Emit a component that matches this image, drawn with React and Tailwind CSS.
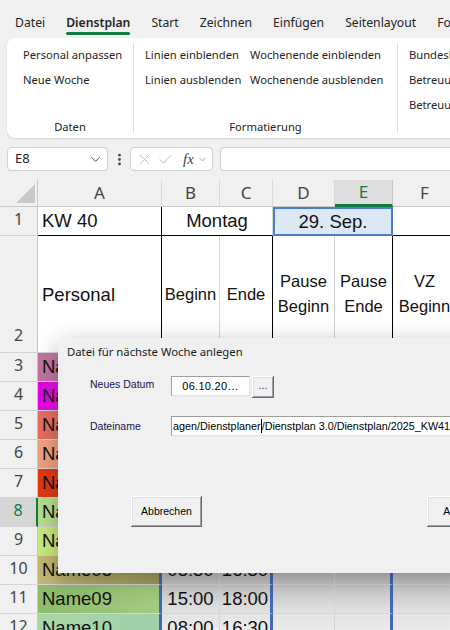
import React from "react";
import { ChevronDown, EllipsisVertical, X, Check } from "lucide-react";

const tabs = ["Datei", "Dienstplan", "Start", "Zeichnen", "Einfügen", "Seitenlayout", "Formeln"];

const W = {
  A: "w-[124px]",
  B: "w-[58px]",
  C: "w-[53px]",
  D: "w-[62px]",
  E: "w-[58px]",
  F: "w-[64px]",
};

const rightCls = {
  g: "border-r border-r-[#d4d4d4]",
  k: "border-r border-r-black",
  b: "border-r-[3px] border-r-[#4169b8]",
  n: "",
};
const bottomCls = {
  g: "border-b border-b-[#d4d4d4]",
  k: "border-b border-b-black",
  n: "",
};

// fill of the time columns; the last rows lie in the dialog's shade
const shade = {
  10: "bg-gradient-to-b from-[#bcbcbc] to-[#c8c8c8]",
  11: "bg-gradient-to-b from-[#c9c9c9] to-[#e1e1e1]",
  12: "bg-gradient-to-b from-[#e3e3e3] to-[#f1f1f1]",
};

const staff = [
  { n: "Name01", bg: "bg-gradient-to-r from-[#bf73a0] to-[#d69cbc]", b: "07:00", c: "15:30" },
  { n: "Name02", bg: "bg-gradient-to-r from-[#e400e4] to-[#ee40ee]", b: "08:00", c: "16:30" },
  { n: "Name03", bg: "bg-gradient-to-r from-[#e66c5e] to-[#ee9484]", b: "09:00", c: "17:30" },
  { n: "Name04", bg: "bg-gradient-to-r from-[#f0a07c] to-[#f6c0a0]", b: "07:30", c: "16:00" },
  { n: "Name05", bg: "bg-gradient-to-r from-[#e2360c] to-[#ea5a30]", b: "08:00", c: "12:00" },
  { n: "Name06", bg: "bg-gradient-to-r from-[#b5de8c] to-[#cbe8a8]", b: "10:00", c: "18:00" },
  { n: "Name07", bg: "bg-gradient-to-r from-[#c6ea7a] to-[#d8f09c]", b: "08:30", c: "17:00" },
  { n: "Name08", bg: "bg-gradient-to-r from-[#c4b874] to-[#a29c5e]", b: "08:30", c: "16:30" },
  { n: "Name09", bg: "bg-gradient-to-r from-[#8dbb6b] to-[#a2cb80]", b: "15:00", c: "18:00" },
  { n: "Name10", bg: "bg-gradient-to-r from-[#a9d6a6] to-[#a0d0aa]", b: "08:00", c: "16:30" },
];

function Cell({ w, r = "g", b = "g", bg = "bg-white", className = "", children }) {
  return (
    <div className={`${w} shrink-0 h-full overflow-hidden ${bg} ${rightCls[r]} ${bottomCls[b]} ${className}`}>
      {children}
    </div>
  );
}

function RowHead({ n, active }) {
  return (
    <div
      className={`w-[38px] shrink-0 h-full flex items-end justify-center pb-[4px] border-b border-b-[#d4d4d4] font-['Segoe_UI','Noto_Sans',sans-serif] text-[16px] ${
        active
          ? "bg-[#d6d6d6] text-[#107c41] border-r-2 border-r-[#107c41]"
          : "bg-[#f0f0f0] text-[#444] border-r border-r-[#c8c8c8]"
      }`}
    >
      {n}
    </div>
  );
}

function Ribbon() {
  return (
    <div className="ml-[7px] w-[470px] h-[100px] rounded-lg bg-white shadow-[0_1px_2px_rgba(0,0,0,0.12)] flex text-[11.2px] text-[#242424] whitespace-nowrap">
      <div className="w-[126px] shrink-0 flex flex-col pt-[4px]">
        <div className="pl-[16px] h-[25px] leading-[25px]">Personal anpassen</div>
        <div className="pl-[16px] h-[25px] leading-[25px]">Neue Woche</div>
        <div className="h-[25px]" />
        <div className="h-[20px] leading-[20px] text-center">Daten</div>
      </div>
      <div className="w-px shrink-0 bg-[#e0e0e0] my-[5px]" />
      <div className="w-[263px] shrink-0 flex flex-col pt-[4px]">
        <div className="flex h-[25px] leading-[25px] pl-[11px]">
          <span className="w-[105px] shrink-0">Linien einblenden</span>
          <span>Wochenende einblenden</span>
        </div>
        <div className="flex h-[25px] leading-[25px] pl-[11px]">
          <span className="w-[105px] shrink-0">Linien ausblenden</span>
          <span>Wochenende ausblenden</span>
        </div>
        <div className="h-[25px]" />
        <div className="h-[20px] leading-[20px] text-center">Formatierung</div>
      </div>
      <div className="w-px shrink-0 bg-[#e0e0e0] my-[5px]" />
      <div className="shrink-0 flex flex-col pt-[4px] pl-[11px]">
        <div className="h-[25px] leading-[25px]">Bundesland</div>
        <div className="h-[25px] leading-[25px]">Betreuung</div>
        <div className="h-[25px] leading-[25px]">Betreuung</div>
      </div>
    </div>
  );
}

function FormulaBar() {
  return (
    <div className="mt-[9px] h-[24px] flex text-[#242424]">
      <div className="ml-[7px] w-[101px] shrink-0 rounded-[4px] border border-[#d1d1d1] bg-white flex items-center justify-between pl-[7px] pr-[4px] text-[13px]">
        <span>E8</span>
        <ChevronDown size={15} strokeWidth={1.5} className="text-[#444]" />
      </div>
      <div className="w-[22px] shrink-0 flex items-center justify-center">
        <EllipsisVertical size={15} strokeWidth={2.5} className="text-[#444]" />
      </div>
      <div className="w-[83px] shrink-0 rounded-[4px] border border-[#d1d1d1] bg-white flex items-center pl-[5px]">
        <X size={17} strokeWidth={1.3} className="text-[#b8b8b8]" />
        <Check size={17} strokeWidth={1.3} className="ml-[4px] text-[#b8b8b8]" />
        <span className="ml-[9px] italic font-['Liberation_Serif',serif] text-[15px] text-[#444] leading-none">fx</span>
        <ChevronDown size={11} strokeWidth={1.5} className="ml-[3px] text-[#777]" />
      </div>
      <div className="ml-[7px] w-[260px] shrink-0 rounded-l-[4px] border border-[#d1d1d1] bg-white" />
    </div>
  );
}

function Sheet() {
  const cellFont = "font-['Liberation_Sans',Arial,sans-serif] text-[#111]";
  return (
    <div className={`mt-[9px] ${cellFont}`}>
      {/* column headers */}
      <div className="flex h-[27px] font-['Segoe_UI','Noto_Sans',sans-serif] text-[17px] text-[#444] bg-[#f0f0f0]">
        <div className="w-[38px] shrink-0 border-r border-r-[#c8c8c8] border-b border-b-[#c8c8c8]">
          <svg width="38" height="27">
            <polygon points="16,23 35,23 35,4" fill="#c9c9c9" />
          </svg>
        </div>
        {["A", "B", "C", "D", "E", "F"].map((c) => (
          <div
            key={c}
            className={`${W[c]} shrink-0 flex items-center justify-center ${
              c === "E"
                ? "bg-[#dedede] text-[#107c41] border-b-[3px] border-b-[#107c41] border-r border-r-[#c8c8c8]"
                : "border-b border-b-[#c8c8c8] border-r border-r-[#d8d8d8]"
            }`}
          >
            {c}
          </div>
        ))}
      </div>

      {/* row 1 */}
      <div className="flex h-[29px] text-[18.5px]">
        <RowHead n="1" />
        <Cell w={W.A} r="k" b="k" className="flex items-center px-[4px]">KW 40</Cell>
        <Cell w="w-[111px]" b="k" className="flex items-center justify-center">Montag</Cell>
        <Cell w="w-[120px]" r="n" b="n" bg="bg-[#dde8f5]" className="border-2 border-[#4a7fd0] flex items-center justify-center">
          29. Sep.
        </Cell>
        <Cell w={W.F} b="k" />
      </div>

      {/* row 2 */}
      <div className="flex h-[117px] text-[16.5px] leading-[25px]">
        <RowHead n="2" />
        <Cell w={W.A} r="k" className="flex items-center px-[4px] text-[18.5px]">Personal</Cell>
        <Cell w={W.B} className="flex items-center justify-center">Beginn</Cell>
        <Cell w={W.C} r="k" className="flex items-center justify-center">Ende</Cell>
        <Cell w={W.D} className="flex flex-col items-center justify-center">
          <span>Pause</span>
          <span>Beginn</span>
        </Cell>
        <Cell w={W.E} r="k" className="flex flex-col items-center justify-center">
          <span>Pause</span>
          <span>Ende</span>
        </Cell>
        <Cell w={W.F} className="flex flex-col items-center justify-center whitespace-nowrap">
          <span>VZ</span>
          <span>Beginn</span>
        </Cell>
      </div>

      {/* staff rows */}
      {staff.map((s, i) => {
        const row = i + 3;
        const bg = shade[row] || "bg-white";
        return (
          <div key={s.n} className="flex h-[29px] text-[18.5px]">
            <RowHead n={String(row)} active={row === 8} />
            <Cell w={W.A} r="b" bg={s.bg} className="flex items-center px-[4px]">{s.n}</Cell>
            <Cell w={W.B} bg={bg} className="flex items-center justify-center">{s.b}</Cell>
            <Cell w={W.C} r="b" bg={bg} className="flex items-center justify-center">{s.c}</Cell>
            <Cell w={W.D} bg={bg} />
            <Cell w={W.E} r="b" bg={bg} />
            <Cell w={W.F} bg={bg} />
          </div>
        );
      })}
    </div>
  );
}

function Dialog() {
  const raised =
    "bg-[#f0f0f0] shadow-[inset_-1px_-1px_#696969,inset_1px_1px_#ffffff,inset_-2px_-2px_#a0a0a0,inset_2px_2px_#e3e3e3]";
  const btn = `h-[31px] w-[71px] shrink-0 flex items-center justify-center ${raised}`;
  return (
    <div className="absolute left-[58px] top-[338px] w-[420px] h-[235px] rounded-tl-[8px] bg-[#f0f0f0] shadow-[0_6px_24px_rgba(0,0,0,0.3)] font-['Tahoma','Liberation_Sans',sans-serif] text-[10.5px] text-black">
      <div className="pt-[5px] pl-[9px] h-[23px] leading-[18px] font-['Segoe_UI','Noto_Sans',sans-serif] text-[11.3px] text-[#1a1a1a]">
        Datei für nächste Woche anlegen
      </div>
      <div className="pl-[32px]">
        <div className="mt-[15px] flex items-start">
          <span className="w-[81px] shrink-0 leading-[14px] pt-[1px] text-[#14144a]">Neues Datum</span>
          <div className="w-[79px] h-[20px] shrink-0 bg-white border border-[#a0a0a0] border-b-[#e3e3e3] border-r-[#e3e3e3] flex items-center justify-center text-[11px] tracking-[0.3px]">
            06.10.20…
          </div>
          <div className={`ml-[2px] w-[22px] h-[22px] shrink-0 flex items-center justify-center text-[#4a1a6a] pb-[3px] ${raised}`}>
            ...
          </div>
        </div>
        <div className="mt-[18px] flex items-center">
          <span className="w-[81px] shrink-0 leading-[14px] text-[#14144a]">Dateiname</span>
          <div className="w-[320px] h-[20px] shrink-0 bg-white border border-[#a0a0a0] border-b-[#e3e3e3] border-r-0 flex items-center whitespace-nowrap overflow-hidden pl-[1px] text-[10.8px]">
            <span>agen/Dienstplaner</span>
            <span className="inline-block w-px h-[14px] shrink-0 bg-black" />
            <span>/Dienstplan 3.0/Dienstplan/2025_KW41.xlsm</span>
          </div>
        </div>
        <div className="mt-[60px] flex">
          <div className={`ml-[41px] ${btn}`}>Abbrechen</div>
          <div className={`ml-[225px] ${btn}`}>Anlegen</div>
        </div>
      </div>
    </div>
  );
}

export default function App() {
  return (
    <div className="relative w-[450px] h-[630px] overflow-hidden bg-[#f0f0f0] font-['Segoe_UI','Noto_Sans',sans-serif]">
      <div className="flex h-[38px] pt-[14px] pl-[15px] gap-[21px] text-[12.2px] text-[#242424] whitespace-nowrap">
        {tabs.map((t) => (
          <div key={t} className={`relative shrink-0 h-[18px] leading-[18px] ${t === "Dienstplan" ? "font-semibold" : ""}`}>
            {t}
            {t === "Dienstplan" && (
              <span className="absolute left-0 right-0 top-[18px] h-[3px] rounded-full bg-[#107c41]" />
            )}
          </div>
        ))}
      </div>
      <Ribbon />
      <FormulaBar />
      <Sheet />
      <Dialog />
    </div>
  );
}
